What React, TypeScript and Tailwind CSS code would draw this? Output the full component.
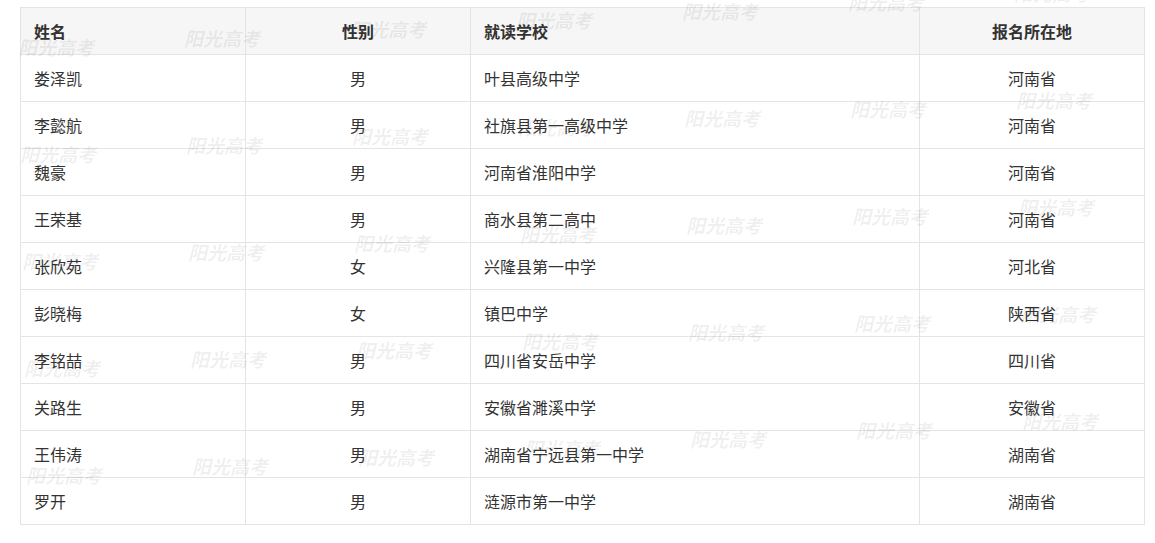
const rows = [
  { name: "娄泽凯", sex: "男", school: "叶县高级中学", place: "河南省" },
  { name: "李懿航", sex: "男", school: "社旗县第一高级中学", place: "河南省" },
  { name: "魏豪", sex: "男", school: "河南省淮阳中学", place: "河南省" },
  { name: "王荣基", sex: "男", school: "商水县第二高中", place: "河南省" },
  { name: "张欣苑", sex: "女", school: "兴隆县第一中学", place: "河北省" },
  { name: "彭晓梅", sex: "女", school: "镇巴中学", place: "陕西省" },
  { name: "李铭喆", sex: "男", school: "四川省安岳中学", place: "四川省" },
  { name: "关路生", sex: "男", school: "安徽省濉溪中学", place: "安徽省" },
  { name: "王伟涛", sex: "男", school: "湖南省宁远县第一中学", place: "湖南省" },
  { name: "罗开", sex: "男", school: "涟源市第一中学", place: "湖南省" },
];

// watermark grid: 5 bands, 7 per band, drifting upward to the right
const marks: { x: number; y: number }[] = [];
for (let r = 0; r < 5; r++) {
  for (let i = 0; i < 7; i++) {
    marks.push({ x: 18 + 2 * r + i * 166, y: 37 + 107 * r - 9 * i });
  }
}

const cell = "border border-[#e4e4e4] h-[47px] px-[13px] align-middle";

export default function App() {
  return (
    <div className="relative h-[543px] w-[1155px] overflow-hidden bg-white font-['Noto_Sans_CJK_SC',sans-serif] text-[16px] text-[#333]">
      <div className="pl-[20px] pt-[7px]">
        <table className="w-[1125px] table-fixed border-collapse">
          <colgroup>
            <col className="w-[225px]" />
            <col className="w-[225px]" />
            <col className="w-[449px]" />
            <col className="w-[225px]" />
          </colgroup>
          <thead>
            <tr className="bg-[#f6f6f6] font-bold">
              <th className={`${cell} text-left font-bold`}>姓名</th>
              <th className={`${cell} text-center font-bold`}>性别</th>
              <th className={`${cell} text-left font-bold`}>就读学校</th>
              <th className={`${cell} text-center font-bold`}>报名所在地</th>
            </tr>
          </thead>
          <tbody>
            {rows.map((r) => (
              <tr key={r.name}>
                <td className={`${cell} text-left`}>{r.name}</td>
                <td className={`${cell} text-center`}>{r.sex}</td>
                <td className={`${cell} text-left`}>{r.school}</td>
                <td className={`${cell} text-center`}>{r.place}</td>
              </tr>
            ))}
          </tbody>
        </table>
      </div>

      {/* WATERMARK */}
      <div className="pointer-events-none absolute inset-0">
        {marks.map((m, i) => (
          <span
            key={i}
            className="absolute whitespace-nowrap text-[19px] font-bold italic leading-none text-black/[0.07]"
            style={{ left: m.x, top: m.y }}
          >
            阳光高考
          </span>
        ))}
      </div>
    </div>
  );
}
